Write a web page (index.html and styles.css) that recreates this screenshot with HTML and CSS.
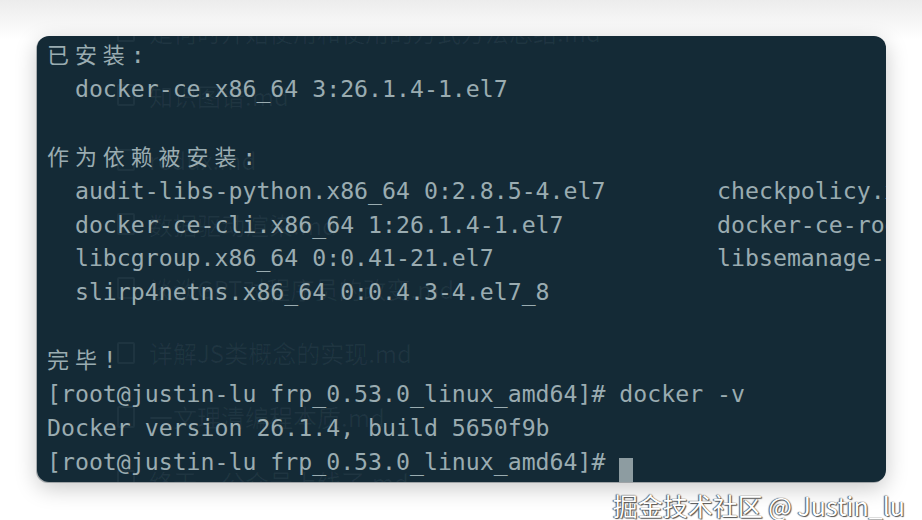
FILE: index.html
```html
<!DOCTYPE html>
<html lang="zh-CN">
<head>
  <meta charset="UTF-8">
  <meta name="viewport" content="width=device-width, initial-scale=1.0">
  <title>docker -v</title>
  <link rel="stylesheet" href="styles.css">
</head>
<body>
  <div class="page">
    <div class="terminal">
      <!-- faint file list showing through the window -->
      <ul class="ghost">
        <li><span class="doc"></span>是何时开始使用和使用的方式方法总结.md</li>
        <li><span class="doc"></span>知识图谱.md</li>
        <li><span class="doc"></span>redux.md</li>
        <li><span class="doc"></span>数据驱动渲染.md</li>
        <li><span class="doc"></span>谈谈GPT对程序员的改变.md</li>
        <li><span class="doc"></span>详解JS类概念的实现.md</li>
        <li><span class="doc"></span>一文理清编程本质.md</li>
        <li><span class="doc"></span>终于，公众号上线了.md</li>
      </ul>
<pre class="screen"><span class="cjk">已安装</span>:
  docker-ce.x86_64 3:26.1.4-1.el7

<span class="cjk">作为依赖被安装</span>:
  audit-libs-python.x86_64 0:2.8.5-4.el7        checkpolicy.x86_64
  docker-ce-cli.x86_64 1:26.1.4-1.el7           docker-ce-rootless
  libcgroup.x86_64 0:0.41-21.el7                libsemanage-python
  slirp4netns.x86_64 0:0.4.3-4.el7_8

<span class="cjk">完毕</span>!
[root@justin-lu frp_0.53.0_linux_amd64]# docker -v
Docker version 26.1.4, build 5650f9b
[root@justin-lu frp_0.53.0_linux_amd64]# <span class="cursor"> </span></pre>
    </div>
    <div class="watermark">掘金技术社区 @ Justin_lu</div>
  </div>
</body>
</html>
```

FILE: styles.css
```css
body {
  margin: 0;
  padding: 0;
  background-color: #fff;
}
.page {
  position: relative;
  width: 922px;
  height: 520px;
  padding-top: 36px;
  box-sizing: border-box;
  background: linear-gradient(#ececec, #fff 40px);
}
.terminal {
  position: relative;
  margin-left: 37px;
  width: 849px;
  height: 446px;
  background-color: #142a36;
  border-radius: 12px;
  overflow: hidden;
  box-shadow: 0 6px 22px rgba(0, 0, 0, 0.22), -1px 1px 0 rgba(120, 130, 135, 0.5);
}
.ghost {
  position: absolute;
  left: 80px;
  top: -37px;
  margin: 0;
  padding: 0;
  list-style: none;
  font-family: "Noto Sans CJK SC", "Noto Sans", sans-serif;
  font-size: 24px;
  color: rgba(200, 220, 230, 0.06);
}
.ghost li {
  display: flex;
  align-items: center;
  height: 64.3px;
  gap: 14px;
}
.doc {
  display: inline-block;
  width: 14px;
  height: 18px;
  border: 2px solid rgba(200, 220, 230, 0.06);
  border-radius: 2px;
}
.screen {
  position: relative;
  margin: 0;
  padding: 2px 0 0 10px;
  font-family: "DejaVu Sans Mono", monospace;
  font-size: 23.2px;
  line-height: 33.9px;
  color: #9aacb1;
  white-space: pre;
}
.cjk {
  font-family: "Noto Sans CJK SC", sans-serif;
  font-size: 22px;
  line-height: 1;
  letter-spacing: 5.9px;
}
.cursor {
  display: inline-block;
  width: 14px;
  height: 32px;
  line-height: 1;
  vertical-align: -8px;
  background-color: #8d9ca1;
}
.watermark {
  position: absolute;
  right: 17px;
  top: 487px;
  font-family: "Noto Sans CJK SC", "Noto Sans", sans-serif;
  font-size: 25px;
  color: #fff;
  text-shadow: 0 0 1px #333, 1px 1px 1px #555, -1px 0 1px #666;
}
```
